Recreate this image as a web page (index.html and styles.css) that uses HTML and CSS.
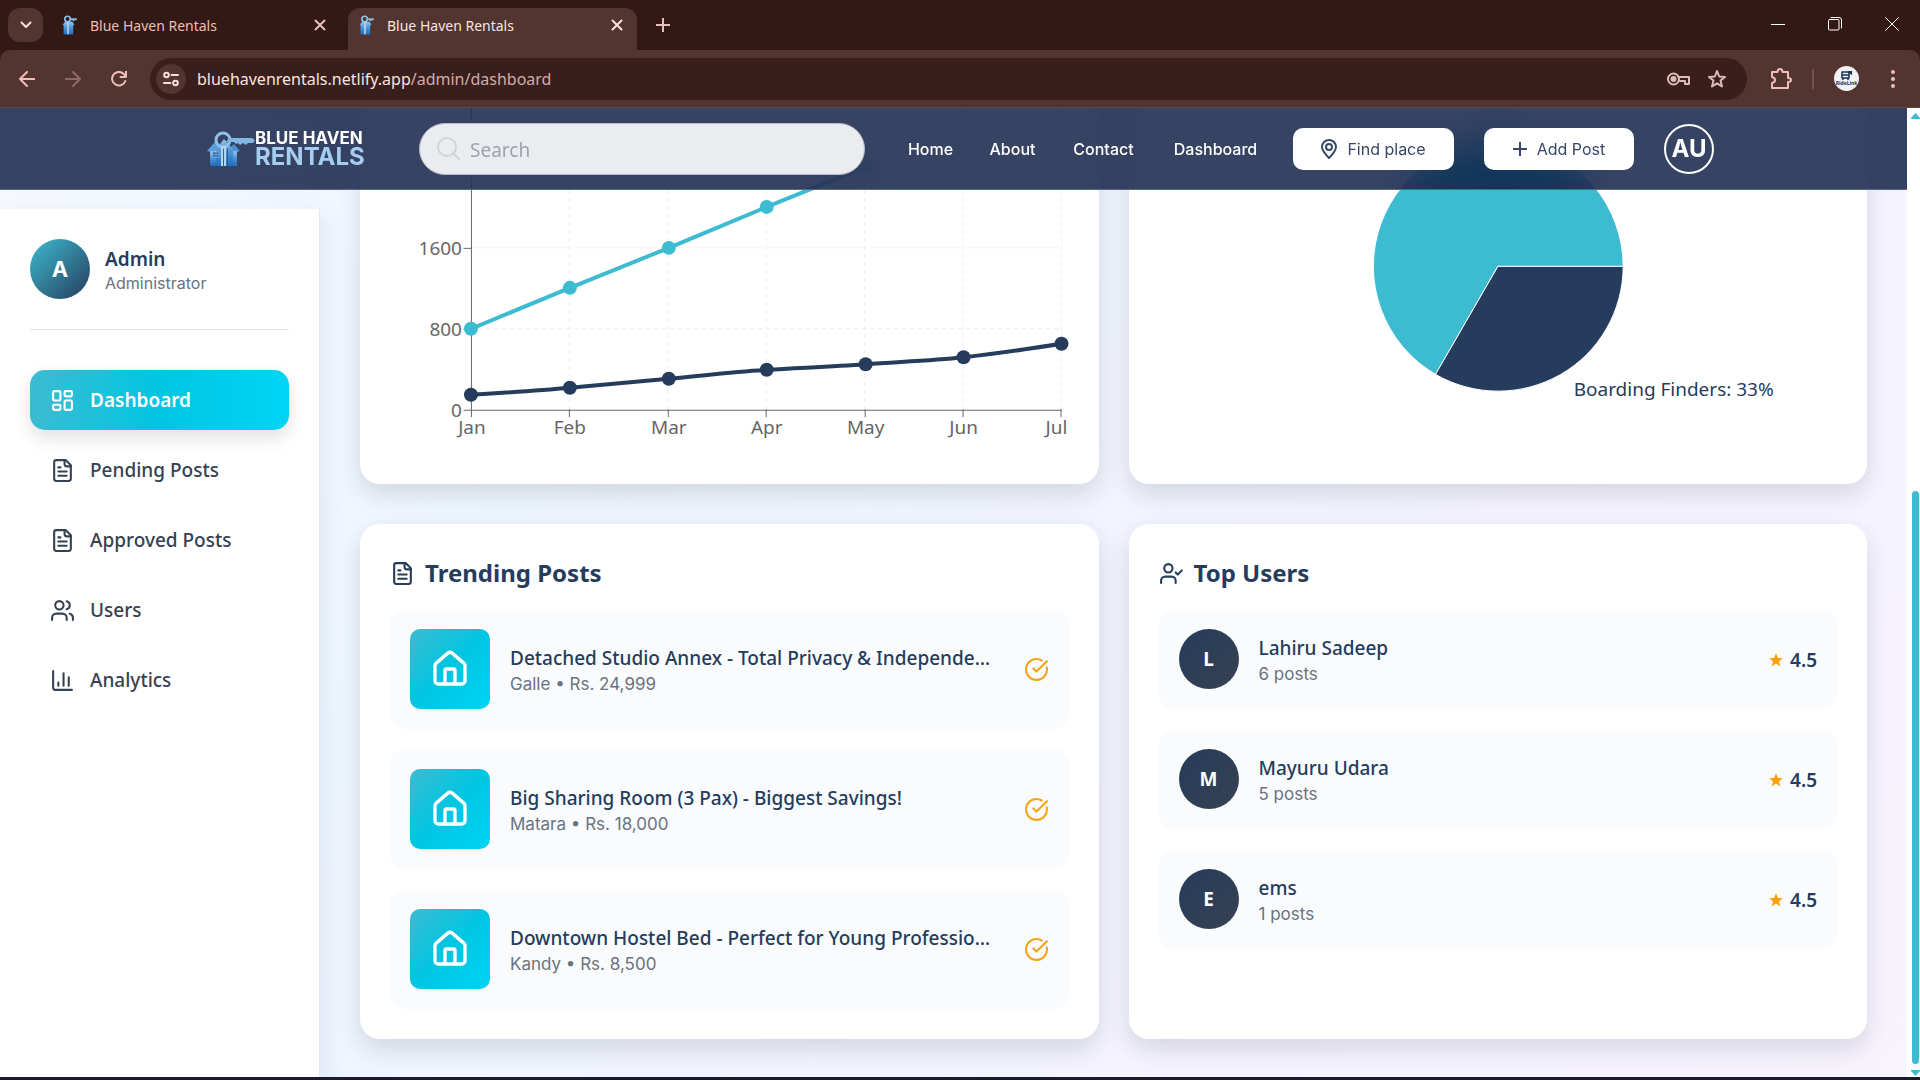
FILE: index.html
```html
<!DOCTYPE html>
<html lang="en">
<head>
<meta charset="utf-8">
<meta name="viewport" content="width=device-width, initial-scale=1">
<title>Blue Haven Rentals</title>
<link rel="stylesheet" href="styles.css">
</head>
<body>
<svg class="sprite" aria-hidden="true">
  <defs>
    <linearGradient id="houseFill" x1="0" y1="0" x2="0" y2="1">
      <stop offset="0" stop-color="#8fc4ee"/><stop offset="0.5" stop-color="#4a92d6"/><stop offset="1" stop-color="#1f6dc0"/>
    </linearGradient>
  </defs>
  <symbol id="brand" viewBox="0 0 48 36">
    <path d="M0 20 8 11l5 5v19H4V21z" fill="#5a9fdc"/>
    <path d="M33 20 27 13l-4 4v18h7V21z" fill="#4a92d6"/>
    <path d="M3 20h27v13q0 2-2 2H5q-2 0-2-2z" fill="url(#houseFill)"/>
    <path d="M9 18 17 8l9 10v17H9z" fill="url(#houseFill)"/>
    <circle cx="16" cy="9" r="7" fill="none" stroke="#8fc0e8" stroke-width="3"/>
    <path d="M22 7h23l3 2-2 3h-5l-2 2-3-2-3 2-2-2-2 1-2-2h-8z" fill="#82b6e4"/>
    <path d="M14 15h5v20h-5z" fill="#b3d5f0"/><path d="M16.500 18v17M20.500 18v17" stroke="#315f91" stroke-width="1"/>
    <path d="M6 21h6v5H6zM9 21v5M6 23.500h6" fill="#2f5e98" stroke="#86b9e5" stroke-width=".7"/>
  </symbol>
  <symbol id="brand-small" viewBox="0 0 36 50">
    <path d="M0 24 6 17h18l5 7-3 2v20q0 3-3 3H5q-3 0-3-3V26z" fill="url(#houseFill)"/>
    <circle cx="12" cy="10" r="7" fill="none" stroke="#8fc0e8" stroke-width="4"/>
    <path d="M17 8h18v5h-5l-3 3-3-3h-7z" fill="#82b6e4"/>
    <path d="M11 17h4v31h-4z" fill="#b3d5f0"/>
  </symbol>
  <symbol id="close" viewBox="0 0 12 12"><path d="M1.500 1.500l9 9M10.500 1.500l-9 9"/></symbol>
  <symbol id="plus" viewBox="0 0 14 14"><path d="M7 0v14M0 7h14"/></symbol>
  <symbol id="file" viewBox="0 0 24 24"><path d="M15 2H6a2 2 0 0 0-2 2v16a2 2 0 0 0 2 2h12a2 2 0 0 0 2-2V7Z"/><path d="M14 2v4a2 2 0 0 0 2 2h4M10 9H8M16 13H8M16 17H8"/></symbol>
  <symbol id="grid" viewBox="0 0 24 24"><rect width="7" height="9" x="3" y="3" rx="1"/><rect width="7" height="5" x="14" y="3" rx="1"/><rect width="7" height="9" x="14" y="12" rx="1"/><rect width="7" height="5" x="3" y="16" rx="1"/></symbol>
  <symbol id="users" viewBox="0 0 24 24"><path d="M16 21v-2a4 4 0 0 0-4-4H6a4 4 0 0 0-4 4v2"/><circle cx="9" cy="7" r="4"/><path d="M22 21v-2a4 4 0 0 0-3-3.870M16 3.130a4 4 0 0 1 0 7.750"/></symbol>
  <symbol id="user-check" viewBox="0 0 24 24"><path d="M16 21v-2a4 4 0 0 0-4-4H6a4 4 0 0 0-4 4v2"/><circle cx="9" cy="7" r="4"/><path d="m16 11 2 2 4-4"/></symbol>
  <symbol id="bars" viewBox="0 0 24 24"><path d="M3 3v16a2 2 0 0 0 2 2h16M8 17v-3M13 17V5M18 17V9"/></symbol>
  <symbol id="house" viewBox="0 0 24 24"><path d="M15 21v-8a1 1 0 0 0-1-1h-4a1 1 0 0 0-1 1v8"/><path d="M3 10a2 2 0 0 1 .709-1.528l7-5.999a2 2 0 0 1 2.582 0l7 5.999A2 2 0 0 1 21 10v9a2 2 0 0 1-2 2H5a2 2 0 0 1-2-2z"/></symbol>
  <symbol id="check" viewBox="0 0 24 24"><path d="M21.801 10A10 10 0 1 1 17 3.335"/><path d="m9 11 3 3L22 4"/></symbol>
  <symbol id="star" viewBox="0 0 24 24"><path d="M12 0l3 8.700 9 .2-7.200 5.500L19.400 23 12 17.900 4.600 23l2.600-8.600L0 8.900l9-.2z"/></symbol>
</svg>

<div class="tabstrip">
  <button class="tab-search" aria-label="Search tabs"><svg width="12" height="8" viewBox="0 0 12 8"><path d="M1.500 1.500 6 6l4.500-4.500"/></svg></button>
  <div class="tab">
    <svg class="favicon"><use href="#brand-small"/></svg><span class="tab-title">Blue Haven Rentals</span>
    <button class="tab-close" aria-label="Close tab"><svg width="12" height="12"><use href="#close"/></svg></button>
  </div>
  <div class="tab tab-active">
    <svg class="favicon"><use href="#brand-small"/></svg><span class="tab-title">Blue Haven Rentals</span>
    <button class="tab-close" aria-label="Close tab"><svg width="12" height="12"><use href="#close"/></svg></button>
  </div>
  <button class="new-tab" aria-label="New tab"><svg width="14" height="14"><use href="#plus"/></svg></button>
  <div class="window-buttons">
    <button aria-label="Minimize"><svg width="14" height="14" viewBox="0 0 14 14"><path d="M0 7.500h14"/></svg></button>
    <button aria-label="Restore"><svg width="14" height="14" viewBox="0 0 14 14"><rect x=".5" y="2.500" width="10.500" height="10.500" rx="1"/><path d="M3 .5h8q2.500 0 2.500 2.500v8"/></svg></button>
    <button aria-label="Close"><svg width="14" height="14" viewBox="0 0 14 14"><path d="M.5.5l13 13M13.500.5l-13 13"/></svg></button>
  </div>
</div>

<div class="toolbar">
  <div class="toolbar-nav">
    <button aria-label="Back"><svg width="16" height="16" viewBox="0 0 16 16"><path d="M15.500 8H1.500M8 1 1 8l7 7"/></svg></button>
    <button class="dim" aria-label="Forward"><svg width="16" height="16" viewBox="0 0 16 16"><path d="M.5 8h14M8 1l7 7-7 7"/></svg></button>
    <button aria-label="Reload"><svg width="16" height="16" viewBox="0 0 16 16"><path d="M14.300 10A6.800 6.800 0 1 1 12.800 3L15 5.500M15 0v6H9.500"/></svg></button>
  </div>
  <div class="omnibox">
    <button class="site-info" aria-label="Site information"><svg width="16" height="16" viewBox="0 0 16 16"><circle cx="3.500" cy="4" r="2.300"/><path d="M8.500 4H15M1 12h6.500"/><circle cx="12.500" cy="12" r="2.300"/></svg></button>
    <div class="url">bluehavenrentals.netlify.app<span>/admin/dashboard</span></div>
    <button aria-label="Passwords"><svg width="23" height="14" viewBox="0 0 23 14"><circle cx="6.500" cy="7" r="5.500"/><circle cx="6.500" cy="7" r="2" fill="currentColor"/><path d="M11.500 5H22v7h-4V9h-6"/></svg></button>
    <button aria-label="Bookmark"><svg width="20" height="20" viewBox="0 0 20 20"><path d="M10 2l2.200 5.500 5.800.4-4.500 3.700L15 17.500l-5-3.200-5 3.200 1.500-5.900L2 7.900l5.800-.4z"/></svg></button>
  </div>
  <div class="toolbar-end">
    <button aria-label="Extensions"><svg width="22" height="22" viewBox="0 0 22 22"><path d="M2 4h5.500q0-3 2.500-3t2.500 3H18v6q3 0 3 2t-3 2v6H2v-5q3-.5 3-3T2 9z"/></svg></button>
    <span class="toolbar-divider"></span>
    <button class="profile" aria-label="Profile"><svg width="11" height="9" viewBox="0 0 11 9"><path d="M1 1h7v6H1zM1 4h7M2 7v2M7 7v2" fill="none" stroke="#1b3155" stroke-width="1.500"/><path d="M8 1l3 2V1z" fill="#45b59b"/></svg><span>RideLink</span></button>
    <button class="menu" aria-label="Menu"><svg width="4" height="18" viewBox="0 0 4 18"><g fill="currentColor" stroke="none"><circle cx="2" cy="2" r="2"/><circle cx="2" cy="9" r="2"/><circle cx="2" cy="16" r="2"/></g></svg></button>
  </div>
</div>

<div class="viewport">
  <div class="page">
    <header class="site-header">
      <a class="logo" href="#"><svg class="logo-mark"><use href="#brand"/></svg><span class="logo-text"><b>BLUE HAVEN</b><strong>RENTALS</strong></span></a>
      <label class="search">
        <svg width="23" height="23" viewBox="0 0 23 23"><circle cx="10" cy="10" r="9"/><path d="M16.500 16.500l5.500 5.500"/></svg>
        <input type="text" placeholder="Search" aria-label="Search">
      </label>
      <nav class="site-nav"><a href="#">Home</a><a href="#">About</a><a href="#">Contact</a><a href="#">Dashboard</a></nav>
      <button class="pill pill-find"><svg width="16" height="20" viewBox="0 0 16 20"><path d="M8 19C4 15 1 11.500 1 8a7 7 0 0 1 14 0c0 3.500-3 7-7 11z"/><circle cx="8" cy="8" r="3"/></svg>Find place</button>
      <button class="pill pill-add"><svg width="14" height="14"><use href="#plus"/></svg>Add Post</button>
      <a class="account" href="#">AU</a>
    </header>

    <aside class="sidebar">
      <div class="identity">
        <span class="identity-avatar">A</span>
        <div class="identity-text"><div class="identity-name">Admin</div><div class="identity-role">Administrator</div></div>
      </div>
      <nav class="side-nav">
        <a class="active" href="#"><svg class="icon"><use href="#grid"/></svg>Dashboard</a>
        <a href="#"><svg class="icon"><use href="#file"/></svg>Pending Posts</a>
        <a href="#"><svg class="icon"><use href="#file"/></svg>Approved Posts</a>
        <a href="#"><svg class="icon"><use href="#users"/></svg>Users</a>
        <a href="#"><svg class="icon"><use href="#bars"/></svg>Analytics</a>
      </nav>
    </aside>

    <main class="content">
      <section class="card">
        <svg class="chart" viewBox="0 0 679 375">
          <g class="gridlines"><path d="M81 88H672M81 169H672M81 250H672"/><path d="M179.500 7V331M278 7V331M376.500 7V331M475 7V331M573.500 7V331M672 7V331"/></g>
          <path class="axis" d="M81.500 7V338M74 331.500H672M74 169.500H81M74 250.500H81M179.500 331v7M278.500 331v7M376.500 331v7M475.500 331v7M573.500 331v7M671.500 331v7"/>
          <g class="ticks ticks-y"><text x="72" y="338">0</text><text x="72" y="257">800</text><text x="72" y="176">1600</text></g>
          <g class="ticks ticks-x"><text x="82" y="355">Jan</text><text x="180" y="355">Feb</text><text x="279" y="355">Mar</text><text x="377" y="355">Apr</text><text x="476" y="355">May</text><text x="574" y="355">Jun</text><text x="667" y="355">Jul</text></g>
          <g class="series series-a"><path d="M81 250 180 209 279 169 377 128C410 115 443 101 476 88"/><circle cx="81" cy="250" r="7"/><circle cx="180" cy="209" r="7"/><circle cx="279" cy="169" r="7"/><circle cx="377" cy="128" r="7"/><circle cx="476" cy="88" r="7"/></g>
          <g class="series series-b"><path d="M81 316C114 314 147 312 180 309S246 303 279 300 344 293 377 291 442 288 476 285.500 541 282 574 278.500 640 270 672 265"/><circle cx="81" cy="316" r="7"/><circle cx="180" cy="309" r="7"/><circle cx="279" cy="300" r="7"/><circle cx="377" cy="291" r="7"/><circle cx="476" cy="285.500" r="7"/><circle cx="574" cy="278.500" r="7"/><circle cx="672" cy="265" r="7"/></g>
        </svg>
      </section>
      <section class="card">
        <svg class="chart" viewBox="0 0 679 375">
          <g stroke="#fff"><path d="M339.500 187.500h125a125 125 0 1 0-187.500 108.250z" fill="#3dbbd1"/><path d="M339.500 187.500h125a125 125 0 0 1-187.500 108.250z" fill="#253c5c"/></g>
          <text class="pie-label" x="415" y="317">Boarding Finders: 33%</text>
        </svg>
      </section>

      <section class="card">
        <h2><svg class="icon"><use href="#file"/></svg>Trending Posts</h2>
        <ul class="list">
          <li><span class="thumb"><svg><use href="#house"/></svg></span><div class="info"><div class="name">Detached Studio Annex - Total Privacy &amp; Independe…</div><div class="meta">Galle • Rs. 24,999</div></div><svg class="icon check"><use href="#check"/></svg></li>
          <li><span class="thumb"><svg><use href="#house"/></svg></span><div class="info"><div class="name">Big Sharing Room (3 Pax) - Biggest Savings!</div><div class="meta">Matara • Rs. 18,000</div></div><svg class="icon check"><use href="#check"/></svg></li>
          <li><span class="thumb"><svg><use href="#house"/></svg></span><div class="info"><div class="name">Downtown Hostel Bed - Perfect for Young Professio…</div><div class="meta">Kandy • Rs. 8,500</div></div><svg class="icon check"><use href="#check"/></svg></li>
        </ul>
      </section>
      <section class="card">
        <h2><svg class="icon"><use href="#user-check"/></svg>Top Users</h2>
        <ul class="list">
          <li><span class="user-avatar">L</span><div class="info"><div class="name">Lahiru Sadeep</div><div class="meta">6 posts</div></div><span class="rating"><svg><use href="#star"/></svg>4.5</span></li>
          <li><span class="user-avatar">M</span><div class="info"><div class="name">Mayuru Udara</div><div class="meta">5 posts</div></div><span class="rating"><svg><use href="#star"/></svg>4.5</span></li>
          <li><span class="user-avatar">E</span><div class="info"><div class="name">ems</div><div class="meta">1 posts</div></div><span class="rating"><svg><use href="#star"/></svg>4.5</span></li>
        </ul>
      </section>
    </main>
  </div>
  <div class="scrollbar">
    <svg width="9" height="6" viewBox="0 0 9 6"><path d="M4.500 0 9 5v1H0V5z"/></svg>
    <div class="scroll-track"><div class="scroll-thumb"></div></div>
    <svg width="9" height="6" viewBox="0 0 9 6"><path d="M4.500 6 9 1V0H0v1z"/></svg>
  </div>
</div>
</body>
</html>
```
FILE: styles.css
```css
:root {
  --navy: #253c5c;
  --cyan: #3dbbd1;
  --ui: "Noto Sans", "Open Sans", sans-serif;
  --soft: Inter, "Liberation Sans", sans-serif;
  --brand: linear-gradient(135deg, #3dbbd1, #00c6e2 50%, #00d4f5);
}

* { box-sizing: border-box; }

body {
  margin: 0;
  height: 100vh;
  display: flex;
  flex-direction: column;
  font-family: var(--ui);
  background: #321915;
  overflow: hidden;
}

button {
  display: flex;
  align-items: center;
  justify-content: center;
  padding: 0;
  border: 0;
  background: none;
  color: inherit;
  font: inherit;
}

a { color: inherit; text-decoration: none; }
svg { display: block; flex: none; fill: none; stroke: currentColor; stroke-width: 2; stroke-linecap: round; stroke-linejoin: round; }
.sprite { position: absolute; width: 0; height: 0; }
.icon { width: 25px; height: 25px; }

/* Tab strip */
.tabstrip { display: flex; height: 50px; padding: 8px 0 0 8px; color: #eabfb9; }
.tab-search { width: 35px; height: 34px; margin-right: 5px; border-radius: 12px; background: #523430; color: #fbdcd7; }
.tab { display: flex; align-items: center; width: 300px; padding: 0 22px 8px 12px; font-size: 14px; }
.tab-title { flex: 1; margin-left: 10px; }
.favicon { width: 20px; height: 20px; stroke: none; }
.tab-active { width: 289px; padding: 0 14px 8px 9px; border-radius: 12px 12px 0 0; background: #523430; color: #fbe3df; }
.new-tab { width: 52px; height: 34px; }
.window-buttons { display: flex; margin-left: auto; color: #fff; height: 31px; }
.window-buttons button { width: 57px; }
.window-buttons svg { stroke-width: 1; }

/* Toolbar */
.toolbar { display: flex; align-items: center; height: 58px; padding: 0 12px 0 4px; border-radius: 10px 10px 0 0; background: #523430; border-bottom: 1px solid #5c4745; color: #f0bdb7; }
.toolbar-nav { display: flex; width: 146px; }
.toolbar-nav button { width: 46px; height: 36px; }
.toolbar-nav .dim { color: #8e6863; }
.omnibox { flex: 1; display: flex; align-items: center; gap: 17px; height: 42px; padding: 0 20px 0 6px; border-radius: 21px; background: #3a1e1b; color: #dcbcb7; }
.site-info { width: 30px; height: 30px; border-radius: 50%; background: #523430; color: #fbdcd7; }
.url { flex: 1; margin-left: -6px; font-size: 16px; color: #fbe3df; }
.url span { color: #cfaeaa; }
.toolbar-end { display: flex; align-items: center; gap: 20px; width: 161px; padding: 0 13px 0 23px; }
.toolbar-divider { width: 2px; height: 20px; background: #76504b; }
.menu { margin-left: auto; }
.profile { flex-direction: column; width: 25px; height: 25px; border-radius: 50%; background: #f2f2f5; color: #1b3155; font-size: 5px; font-weight: 700; line-height: 6px; }

/* Page frame */
.viewport { flex: 1; min-height: 0; display: flex; border-bottom: 3px solid #1b1b2b; background: #fff; }
.page { position: relative; flex: 1; min-width: 0; display: flex; overflow: hidden; background: linear-gradient(125deg, #f5f8ff, #eef6ff 30%, #f5f3ff 75%, #f8f4fe); }
.scrollbar { display: flex; flex-direction: column; align-items: center; width: 13px; padding: 5px 0 1px 3px; }
.scrollbar svg { fill: var(--cyan); stroke: none; }
.scroll-track { flex: 1; display: flex; flex-direction: column; justify-content: flex-end; padding: 6px 0; }
.scroll-thumb { width: 7px; height: 61%; border-radius: 4px; background: var(--cyan); }

/* Site header */
.site-header { position: absolute; inset: 0 0 auto; z-index: 1; display: flex; align-items: center; gap: 30px; height: 82px; padding: 0 193px 0 207px; border-bottom: 1px solid #5a6483; background: rgba(5, 20, 59, .8); backdrop-filter: blur(20px); color: #fff; font-family: var(--soft); }
.logo { display: flex; align-items: center; width: 161px; margin-right: 21px; }
.logo-mark { width: 48px; height: 36px; stroke: none; }
.logo-text { display: flex; flex-direction: column; white-space: nowrap; }
.logo-text b { font-size: 17px; line-height: 16px; }
.logo-text strong { font-size: 24px; line-height: 21px; color: #a5cdf0; }
.search { flex: 1; display: flex; align-items: center; gap: 10px; height: 52px; padding: 0 17px; border: 1px solid #b5bbca; border-radius: 26px; background: #ebecf0; color: #d0d4da; }
.search input { flex: 1; min-width: 0; padding: 2px 0 0; border: 0; outline: 0; background: none; font: 19px var(--ui); color: var(--navy); }
.search input::placeholder { color: #9ca3af; opacity: 1; }
.site-nav { display: grid; grid-template-columns: 51px 53px 69px 95px; gap: 30px; margin-left: 10px; font-size: 16px; font-weight: 500; text-align: center; }
.pill { gap: 10px; height: 42px; border-radius: 10px; background: #fff; color: #364866; font-size: 16px; }
.pill svg { stroke-width: 2; }
.pill-find { width: 161px; }
.pill-add { width: 150px; }
.account { display: flex; align-items: center; justify-content: center; width: 50px; height: 50px; border: 2px solid #fff; border-radius: 50%; font-size: 24px; font-weight: 700; }

/* Sidebar */
.sidebar { width: 320px; margin-top: 101px; padding: 30px; border-right: 1px solid #e5e7eb; background: #fff; box-shadow: 6px 6px 20px rgba(37, 60, 92, .07); }
.identity { display: flex; align-items: center; gap: 15px; padding-bottom: 30px; border-bottom: 1px solid #e5e7eb; }
.identity-avatar { display: flex; align-items: center; justify-content: center; width: 60px; height: 60px; border-radius: 50%; background: linear-gradient(135deg, #3dbbd1, #253c5c); color: #fff; font: 700 22px var(--soft); }
.identity-text { padding-top: 4px; }
.identity-name { font-size: 19px; font-weight: 600; line-height: 24px; color: var(--navy); }
.identity-role { font: 16px/24px var(--soft); color: #6b7280; }
.side-nav { display: flex; flex-direction: column; gap: 10px; margin-top: 40px; }
.side-nav a { display: flex; align-items: center; gap: 15px; height: 60px; padding: 0 20px; border-radius: 15px; font-size: 19px; font-weight: 500; color: #374151; }
.side-nav .active { background: linear-gradient(90deg, #3dbbd1, #00c6e2 50%, #00d4f5); color: #fff; font-weight: 600; box-shadow: 0 8px 18px rgba(0, 0, 0, .12); }

/* Dashboard cards */
.content { flex: 1; min-width: 0; display: grid; grid-template-columns: 1fr 1fr; align-content: end; gap: 40px 30px; padding: 0 40px 38px; }
.card { min-width: 0; padding: 30px; border-radius: 20px; background: #fff; box-shadow: 0 10px 24px rgba(31, 41, 55, .15); }
.card h2 { display: flex; align-items: center; gap: 10px; margin: 0 0 17px; font-size: 24px; font-weight: 700; line-height: 38px; color: var(--navy); }
.list { display: flex; flex-direction: column; gap: 20px; margin: 0; padding: 0; list-style: none; }
.list li { display: flex; align-items: center; gap: 20px; padding: 20px; border-radius: 15px; background: #f9fbfc; }
.thumb { display: flex; align-items: center; justify-content: center; width: 80px; height: 80px; border-radius: 10px; background: var(--brand); color: #fff; }
.thumb svg { width: 40px; height: 40px; }
.info { flex: 1; min-width: 0; padding-top: 4px; }
.name { overflow: hidden; text-overflow: ellipsis; white-space: nowrap; font-size: 19px; font-weight: 500; line-height: 26px; color: var(--navy); }
.meta { font: 17px/26px var(--soft); color: #6b7280; }
.check { color: #f5a316; }
.user-avatar { display: flex; align-items: center; justify-content: center; width: 60px; height: 60px; border-radius: 50%; background: linear-gradient(135deg, #253c5c, #374151); color: #fff; font-size: 19px; font-weight: 700; }
.rating { display: flex; align-items: center; gap: 7px; padding-top: 2px; font-size: 19px; font-weight: 600; color: var(--navy); }
.rating svg { width: 14px; height: 14px; fill: #ff9d00; stroke: none; }

/* Charts */
.chart { width: 100%; height: auto; }
.chart text { stroke: none; font-size: 19px; }
.gridlines { stroke: #eee; stroke-width: 1; stroke-dasharray: 4 4; }
.axis { stroke: #666; stroke-width: 1; }
.chart g[stroke] { stroke-width: 1; }
.ticks { fill: #666; }
.ticks-y { text-anchor: end; }
.ticks-x { text-anchor: middle; }
.series path { stroke-width: 4; }
.series circle { stroke: none; }
.series-a { stroke: var(--cyan); }
.series-a circle { fill: var(--cyan); }
.series-b { stroke: var(--navy); }
.series-b circle { fill: var(--navy); }
.pie-label { fill: var(--navy); }
```
